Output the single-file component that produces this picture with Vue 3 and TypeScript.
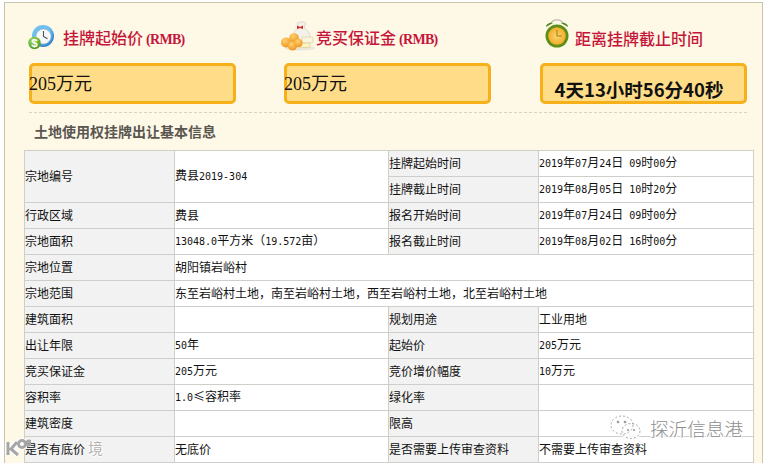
<script setup lang="ts">
interface Cell {
  text: string
  label?: boolean
  span?: number
  rows?: number
}

const rows: Cell[][] = [
  [
    { text: '宗地编号', label: true, rows: 2 },
    { text: '费县2019-304', rows: 2 },
    { text: '挂牌起始时间', label: true },
    { text: '2019年07月24日 09时00分' },
  ],
  [{ text: '挂牌截止时间', label: true }, { text: '2019年08月05日 10时20分' }],
  [
    { text: '行政区域', label: true },
    { text: '费县' },
    { text: '报名开始时间', label: true },
    { text: '2019年07月24日 09时00分' },
  ],
  [
    { text: '宗地面积', label: true },
    { text: '13048.0平方米（19.572亩）' },
    { text: '报名截止时间', label: true },
    { text: '2019年08月02日 16时00分' },
  ],
  [{ text: '宗地位置', label: true }, { text: '胡阳镇岩峪村', span: 3 }],
  [{ text: '宗地范围', label: true }, { text: '东至岩峪村土地，南至岩峪村土地，西至岩峪村土地，北至岩峪村土地', span: 3 }],
  [
    { text: '建筑面积', label: true },
    { text: '' },
    { text: '规划用途', label: true },
    { text: '工业用地' },
  ],
  [
    { text: '出让年限', label: true },
    { text: '50年' },
    { text: '起始价', label: true },
    { text: '205万元' },
  ],
  [
    { text: '竞买保证金', label: true },
    { text: '205万元' },
    { text: '竞价增价幅度', label: true },
    { text: '10万元' },
  ],
  [
    { text: '容积率', label: true },
    { text: '1.0≤容积率' },
    { text: '绿化率', label: true },
    { text: '' },
  ],
  [
    { text: '建筑密度', label: true },
    { text: '' },
    { text: '限高', label: true },
    { text: '' },
  ],
  [
    { text: '是否有底价', label: true },
    { text: '无底价' },
    { text: '是否需要上传审查资料', label: true },
    { text: '不需要上传审查资料' },
  ],
]

// Latin runs are set half-width against the CJK text, as in the source page.
function segments(text: string): { t: string; latin: boolean }[] {
  return (text.match(/[\x20-\x7e]+|[^\x20-\x7e]+/g) ?? []).map((t) => ({
    t,
    latin: /^[\x20-\x7e]/.test(t),
  }))
}
</script>

<template>
  <div class="page">
    <div class="panel">
      <div class="stats">
        <section class="stat stat-a">
          <h3 class="stat-title">
            <svg class="icon" width="28" height="26" viewBox="0 0 28 26">
              <defs>
                <radialGradient id="ring" cx="0.4" cy="0.35" r="0.75">
                  <stop offset="0.55" stop-color="#6cc0f2" />
                  <stop offset="1" stop-color="#1468b8" />
                </radialGradient>
                <radialGradient id="coin" cx="0.4" cy="0.3" r="0.8">
                  <stop offset="0" stop-color="#a6e05a" />
                  <stop offset="1" stop-color="#3f8f1e" />
                </radialGradient>
              </defs>
              <circle cx="15" cy="11" r="11" fill="url(#ring)" />
              <circle cx="15.5" cy="11.5" r="7.6" fill="#f5f7f8" stroke="#8fa6b8" stroke-width=".6" />
              <path d="M15.5 6v5.5l4 2.2" fill="none" stroke="#4a5660" stroke-width="1.1" />
              <circle cx="6.5" cy="18" r="6.2" fill="url(#coin)" />
              <text x="6.5" y="22.4" class="dollar">$</text>
            </svg>
            <span class="title-text">挂牌起始价<span class="title-latin">(RMB)</span></span>
          </h3>
          <div class="value">205万元</div>
        </section>
        <section class="stat stat-b">
          <h3 class="stat-title">
            <svg class="icon" width="36" height="30" viewBox="0 0 36 30">
              <defs>
                <radialGradient id="gold" cx="0.4" cy="0.3" r="0.8">
                  <stop offset="0" stop-color="#ffd070" />
                  <stop offset="1" stop-color="#ec8f14" />
                </radialGradient>
              </defs>
              <ellipse cx="20" cy="27" rx="15" ry="2.6" fill="#ebe6da" />
              <path d="M17 2c3-1.400 7-1.400 9 0l-2 5c4 2 6 5 6 9 0 3-5 5-9 4-4-1-7-4-7-8 0-2 2-4 5-5z" fill="#f4f1ea" stroke="#cfc8b8" stroke-width=".6" />
              <path d="M17 4.500l3 1.500 3-1.500 0 3.500-3-1-3 1z" fill="#d0282e" />
              <rect x="22" y="16" width="11" height="6" rx="1" fill="#faf5de" stroke="#d6c68e" stroke-width=".6" />
              <rect x="20" y="22" width="10" height="4.500" rx="1" fill="#fbf3c0" stroke="#d6c68e" stroke-width=".6" />
              <circle cx="6" cy="21.500" r="5" fill="url(#gold)" />
              <circle cx="14" cy="17" r="4.800" fill="url(#gold)" />
              <circle cx="12.500" cy="25" r="4.600" fill="url(#gold)" />
              <circle cx="18.500" cy="22" r="4.200" fill="url(#gold)" />
            </svg>
            <span class="title-text">竞买保证金<span class="title-latin">(RMB)</span></span>
          </h3>
          <div class="value">205万元</div>
        </section>
        <section class="stat stat-c">
          <h3 class="stat-title">
            <svg class="icon" width="24" height="31" viewBox="0 0 24 31">
              <defs>
                <radialGradient id="face" cx="0.5" cy="0.5" r="0.55">
                  <stop offset="0" stop-color="#fbd76a" />
                  <stop offset="1" stop-color="#f0a826" />
                </radialGradient>
              </defs>
              <path d="M6 6C6 0.500 18 0.500 18 6" fill="none" stroke="#b9b9b0" stroke-width="1.200" />
              <path d="M1 9c0-3 4-5 7-4zM23 9c0-3-4-5-7-4z" fill="#4f8a17" />
              <circle cx="12" cy="18" r="11.500" fill="#5d8f16" />
              <circle cx="12" cy="18" r="8.800" fill="url(#face)" />
              <path d="M12 12v6h5" fill="none" stroke="#a8801c" stroke-width="1.100" />
            </svg>
            <span class="title-text">距离挂牌截止时间</span>
          </h3>
          <div class="value value-time">4天13小时56分40秒</div>
        </section>
      </div>

      <h2 class="heading">土地使用权挂牌出让基本信息</h2>

      <table class="info">
        <colgroup>
          <col class="col-a" />
          <col class="col-b" />
          <col class="col-a" />
          <col class="col-c" />
        </colgroup>
        <tbody>
          <tr v-for="(row, r) in rows" :key="r">
            <td
              v-for="(cell, c) in row"
              :key="c"
              :class="{ label: cell.label }"
              :colspan="cell.span ?? 1"
              :rowspan="cell.rows ?? 1"
            >
              <template v-for="(seg, s) in segments(cell.text)" :key="s">
                <span v-if="seg.latin" class="latin">{{ seg.t }}</span>
                <template v-else>{{ seg.t }}</template>
              </template>
            </td>
          </tr>
        </tbody>
      </table>
    </div>

    <div class="mark mark-left">
      <svg width="26" height="20" viewBox="0 0 26 20">
        <g fill="none" stroke="#fff" stroke-width="5">
          <path d="M3 4v13M12 4L6 11l7 6" />
          <circle cx="17" cy="6" r="3.500" />
        </g>
        <g fill="none" stroke="#a6a6a6" stroke-width="3">
          <path d="M3 4v13M12 4L6 11l7 6" />
          <circle cx="17" cy="6" r="3.500" />
          <circle cx="24" cy="5" r="2" />
        </g>
      </svg>
      <span class="mark-left-text">境</span>
    </div>

    <div class="mark mark-right">
      <svg width="34" height="28" viewBox="0 0 34 28">
        <ellipse cx="13" cy="11" rx="11" ry="9" fill="rgba(255,255,255,.7)" stroke="#fff" stroke-width="3" />
        <ellipse cx="22" cy="17" rx="9" ry="7.500" fill="rgba(255,255,255,.8)" stroke="#fff" stroke-width="3" />
        <ellipse cx="13" cy="11" rx="11" ry="9" fill="none" stroke="#a8a8a8" stroke-width="1" stroke-dasharray="2 2" />
        <ellipse cx="22" cy="17" rx="9" ry="7.500" fill="none" stroke="#a0a0a0" stroke-width="1" stroke-dasharray="2 2" />
        <circle cx="9" cy="8" r="1.300" fill="#999" />
        <circle cx="16" cy="8" r="1.300" fill="#999" />
        <circle cx="19" cy="16" r="1.100" fill="#999" />
        <circle cx="25" cy="16" r="1.100" fill="#999" />
      </svg>
      <span class="mark-right-text">探沂信息港</span>
    </div>
  </div>
</template>

<style>
html,
body {
  margin: 0;
  background: #fff;
  overflow: hidden;
}
</style>

<style scoped>
.page {
  position: relative;
  width: 767px;
  height: 463px;
  overflow: hidden;
  padding: 2px 0 0 4px;
  box-sizing: border-box;
  font-family: "Noto Sans CJK SC", sans-serif;
  color: #111;
}
.panel {
  width: 759px;
  height: 470px;
  box-sizing: border-box;
  border: 1px solid #c9c5ab;
  background: #fef8e7;
  padding: 18px 0 0 19px;
}
.stats {
  display: grid;
  grid-template-columns: 255px 256px 207px;
  margin-left: 5px;
  padding-bottom: 8px;
  border-bottom: 1px dashed #d6d3c4;
  width: 718px;
}
.stat-title {
  display: flex;
  align-items: center;
  height: 34px;
  margin: 0 0 8px;
  font-weight: 400;
}
.stat-a .stat-title {
  margin-left: -1px;
}
.stat-a .icon {
  margin-right: 7px;
}
.stat-b .stat-title {
  margin-left: -4px;
}
.stat-b .icon {
  margin-bottom: 4px;
}
.stat-c .stat-title {
  margin-left: 5px;
}
.stat-c .icon {
  margin-right: 6px;
  margin-bottom: 9px;
}
.title-text {
  font-size: 16px;
  line-height: 20px;
  font-weight: 500;
  color: #c5163a;
}
.title-latin {
  font-family: "Liberation Serif", serif;
  font-size: 14px;
  font-weight: 700;
  letter-spacing: -0.7px;
  margin-left: 3px;
}
.value {
  width: 207px;
  height: 41px;
  box-sizing: border-box;
  border: 3px solid #f5b01a;
  border-radius: 5px;
  background: #ffdd88;
  font-family: "Liberation Serif", "Noto Sans CJK SC", serif;
  font-size: 18px;
  line-height: 36px;
  text-indent: -3px;
}
.value-time {
  font-family: "Noto Sans CJK SC", sans-serif;
  padding-right: 9px;
  text-align: center;
  text-indent: 0;
  font-size: 18.500px;
  font-weight: 700;
  line-height: 46px;
  overflow: hidden;
}
.heading {
  margin: 8px 0 9px 10px;
  font-size: 14px;
  line-height: 20px;
  font-weight: 700;
  color: #595650;
}
.info {
  width: 730px;
  table-layout: fixed;
  border-collapse: collapse;
  background: #fff;
  font-size: 12px;
}
.col-a {
  width: 150px;
}
.col-b {
  width: 214px;
}
.col-c {
  width: 215px;
}
td {
  height: 26px;
  padding: 0 0 1px;
  box-sizing: border-box;
  border: 1px solid #cfcfca;
  line-height: 14px;
  white-space: nowrap;
}
td.label {
  background: #f2f2f2;
}
.latin {
  font-family: "DejaVu Sans Mono", monospace;
  font-size: 10px;
}
.mark {
  position: absolute;
  display: flex;
  align-items: center;
  pointer-events: none;
}
.mark-left {
  left: 5px;
  top: 438px;
  width: 98px;
  justify-content: space-between;
}
.mark-left-text {
  font-size: 15px;
  line-height: 20px;
  color: #b4b4b4;
  text-shadow: 1px 0 0 #fff, -1px 0 0 #fff, 0 1px 0 #fff, 0 -1px 0 #fff;
}
.mark-right {
  left: 609px;
  top: 414px;
  gap: 7px;
}
.mark-right-text {
  font-size: 18.600px;
  line-height: 28px;
  font-weight: 300;
  color: #8f8f8f;
  text-shadow: 1px 1px 0 #fff, -1px -1px 0 #fff, 1px -1px 0 #fff, -1px 1px 0 #fff;
}
.dollar {
  font: 700 11.500px "Liberation Sans", sans-serif;
  fill: #fff;
  text-anchor: middle;
}
</style>
